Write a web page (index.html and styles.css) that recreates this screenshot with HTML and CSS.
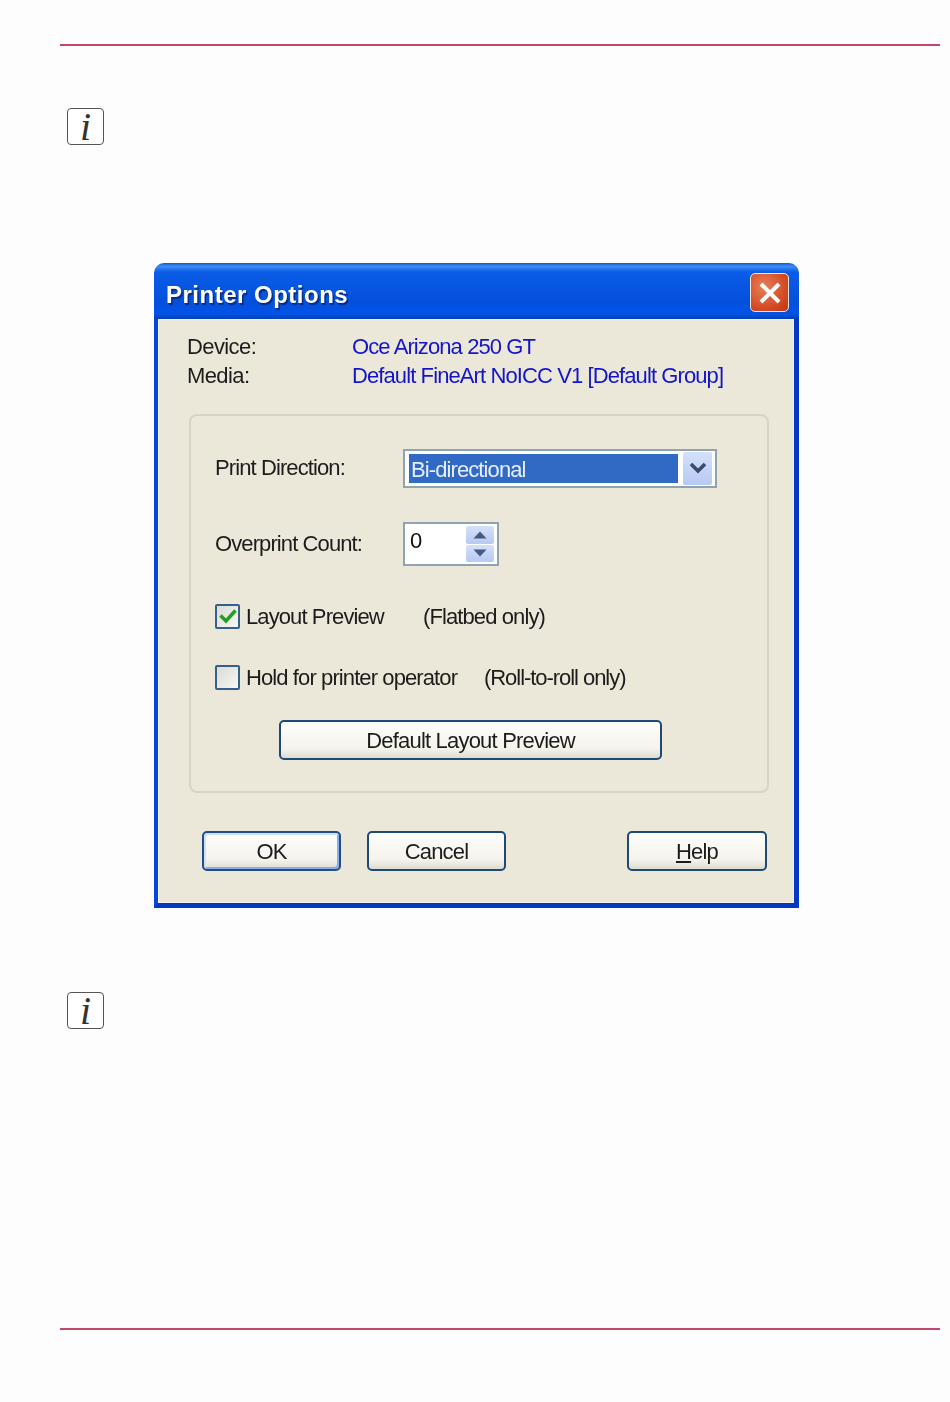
FILE: index.html
```
<!DOCTYPE html>
<html lang="en">
<head>
<meta charset="utf-8">
<title>Printer Options</title>
<link rel="stylesheet" href="styles.css">
</head>
<body>
<main class="page">
  <hr class="rule rule-top">
  <div class="note-icon"><span class="note-i">i</span></div>
  <section class="dialog">
    <header class="titlebar">
      <h1 class="title">Printer Options</h1>
      <button class="close" aria-label="Close">
        <svg class="close-x" viewBox="0 0 26 26" width="26" height="26"><path d="M4 4 L22 22 M22 4 L4 22" stroke="#fff" stroke-width="4" fill="none"/></svg>
      </button>
    </header>
    <div class="client">
      <dl class="info">
        <dt>Device:</dt><dd>Oce Arizona 250 GT</dd>
        <dt>Media:</dt><dd>Default FineArt NoICC V1 [Default Group]</dd>
      </dl>
      <div class="group">
        <div class="row row-direction">
          <label class="label">Print Direction:</label>
          <div class="select">
            <span class="select-value">Bi-directional</span>
            <span class="select-btn">
              <svg viewBox="0 0 20 14" width="20" height="14"><path d="M3 3 L10 10 L17 3" stroke="#3a4a6e" stroke-width="3.6" fill="none"/></svg>
            </span>
          </div>
        </div>
        <div class="row row-count">
          <label class="label">Overprint Count:</label>
          <div class="spin">
            <span class="spin-value">0</span>
            <span class="spin-btns">
              <span class="spin-btn"><svg viewBox="0 0 14 8" width="14" height="8"><path d="M7 0.5 L13.5 7.5 H0.5 Z" fill="#45587e"/></svg></span>
              <span class="spin-btn"><svg viewBox="0 0 14 8" width="14" height="8"><path d="M0.5 0.5 H13.5 L7 7.5 Z" fill="#45587e"/></svg></span>
            </span>
          </div>
        </div>
        <div class="row row-check1">
          <span class="check">
            <svg viewBox="0 0 20 20" width="20" height="20"><path d="M2.5 9.5 L8 15 L17.5 4.5" stroke="#21a121" stroke-width="3.6" fill="none"/></svg>
          </span>
          <span class="check-label c1">Layout Preview</span>
          <span class="hint">(Flatbed only)</span>
        </div>
        <div class="row row-check2">
          <span class="check"></span>
          <span class="check-label c2">Hold for printer operator</span>
          <span class="hint hint-roll">(Roll-to-roll only)</span>
        </div>
        <button class="btn btn-wide">Default Layout Preview</button>
      </div>
      <div class="actions">
        <button class="btn btn-action btn-default">OK</button>
        <button class="btn btn-action">Cancel</button>
        <button class="btn btn-action btn-help"><span class="accel">H</span>elp</button>
      </div>
    </div>
  </section>
  <div class="note-icon note-second"><span class="note-i">i</span></div>
  <hr class="rule rule-bottom">
</main>
</body>
</html>
```
FILE: styles.css
```
* { box-sizing: border-box; }
html, body { margin: 0; padding: 0; }
body { background: #fdfdfd; width: 950px; height: 1402px; overflow: hidden; font-family: "Liberation Sans", Arial, sans-serif; }
.page { padding: 44px 10px 0 60px; display: flex; flex-direction: column; height: 1402px; }
.rule { border: 0; height: 2px; background: #c2486a; margin: 0; width: 880px; flex: none; }
.rule-bottom { margin-top: 299px; }
.note-icon { width: 37px; height: 37px; margin: 62px 0 0 7px; border: 1.5px solid #555; border-radius: 4px; background: #fff; display: flex; align-items: center; justify-content: center; flex: none; }
.note-i { font: italic 40px/33px "Liberation Serif", serif; color: #333; }
.note-second { margin-top: 84px; }
.dialog { width: 645px; height: 645px; margin: 118px 0 0 94px; flex: none; display: flex; flex-direction: column; filter: blur(0.4px); }
.titlebar { height: 56px; flex: none; border-radius: 10px 10px 0 0; background: linear-gradient(#0a5ae0 0, #3d8cf5 6%, #0a5ce6 16%, #0450dc 70%, #0353e8 90%, #0340b8 100%); display: flex; align-items: center; justify-content: space-between; padding: 0 10px 0 12px; }
.title { margin: 7px 0 0; font: bold 24px/1 "Liberation Sans", Arial, sans-serif; letter-spacing: 0.5px; color: #fff; text-shadow: 1.5px 1.5px 1px #0a2a80; }
.close { width: 39px; height: 39px; margin-top: 3px; padding: 0; border: 1.5px solid #f3e6df; border-radius: 5px; background: radial-gradient(circle at 35% 35%, #e8805a, #d2451e 70%, #b8391a); display: flex; align-items: center; justify-content: center; }
.client { flex: 1; background: #ebe8d9; border: solid #0547d8; border-width: 0 5px 5px 4px; border-bottom-color: #0338c0; border-right-color: #0338c0; box-shadow: inset 0 0 0 1px #f4f2e8; padding: 13px 25px 0 29px; }
.info { margin: 0; display: grid; grid-template-columns: 165px 1fr; grid-auto-rows: 29px; font-size: 22px; line-height: 29px; color: #1c1c1c; }
.info dt { margin: 0; letter-spacing: -0.6px; }
.info dd { margin: 0; color: #1414c8; letter-spacing: -0.9px; white-space: nowrap; }
.group { width: 580px; height: 379px; margin: 24px 0 0 2px; border: 2px solid #d8d4c2; border-radius: 8px; padding: 32px 0 0 24px; font-size: 22px; color: #1c1c1c; }
.row { display: flex; align-items: center; }
.label { width: 188px; letter-spacing: -0.9px; flex: none; }
.row-direction { height: 40px; }
.row-count { height: 44px; margin-top: 34px; }
.row-check1 { height: 26px; margin-top: 37px; }
.row-check2 { height: 26px; margin-top: 35px; }
.select { width: 314px; height: 39px; border: 2px solid #8fa3b0; background: #fff; padding: 1px 3px 1px 4px; display: flex; gap: 5px; }
.select-value { flex: 1; margin: 2px 0; background: #316ac5; color: #e6eeff; font-size: 22px; line-height: 31px; padding-left: 2px; letter-spacing: -0.9px; }
.select-btn { width: 29px; background: linear-gradient(#d5e1f9, #b7c9f4); border-radius: 2px; display: flex; align-items: center; justify-content: center; }
.spin { width: 96px; height: 44px; border: 2px solid #8fa3b0; background: #fff; display: flex; justify-content: space-between; padding: 2px 3px; }
.spin-value { font-size: 22px; line-height: 30px; padding-left: 2px; color: #111; }
.spin-btns { width: 28px; display: flex; flex-direction: column; gap: 1px; }
.spin-btn { flex: 1; background: linear-gradient(#d5e1f9, #b7c9f4); display: flex; align-items: center; justify-content: center; border-radius: 2px; }
.check { width: 25px; height: 25px; flex: none; border: 2px solid #35608a; border-radius: 2px; background: linear-gradient(135deg, #dcdcd6, #f6f6f3); display: flex; align-items: center; justify-content: center; }
.check-label { margin-left: 6px; padding-top: 2px; letter-spacing: -0.9px; white-space: nowrap; }
.c1 { width: 177px; }
.c2 { width: 238px; }
.hint { padding-top: 2px; letter-spacing: -0.9px; white-space: nowrap; }
.hint-roll { letter-spacing: -1.05px; }
.btn { font: 22px/1 "Liberation Sans", Arial, sans-serif; color: #1c1c1c; letter-spacing: -0.8px; border: 2px solid #1f4a78; border-radius: 5px; background: linear-gradient(#fdfdfb, #f4f3ec 75%, #dedcce); padding: 1px 0 0; }
.btn-wide { display: block; width: 383px; height: 40px; margin: 30px 0 0 64px; }
.actions { display: flex; margin: 38px 0 0 15px; }
.btn-action { width: 139px; height: 40px; margin-right: 26px; flex: none; }
.btn-default { box-shadow: inset 2px 2px 0 #cfe0f7, inset -2px -2px 0 #89ade4; border-color: #1f4f86; }
.btn-help { width: 140px; margin-left: 95px; margin-right: 0; }
.accel { text-decoration: underline; }
```
